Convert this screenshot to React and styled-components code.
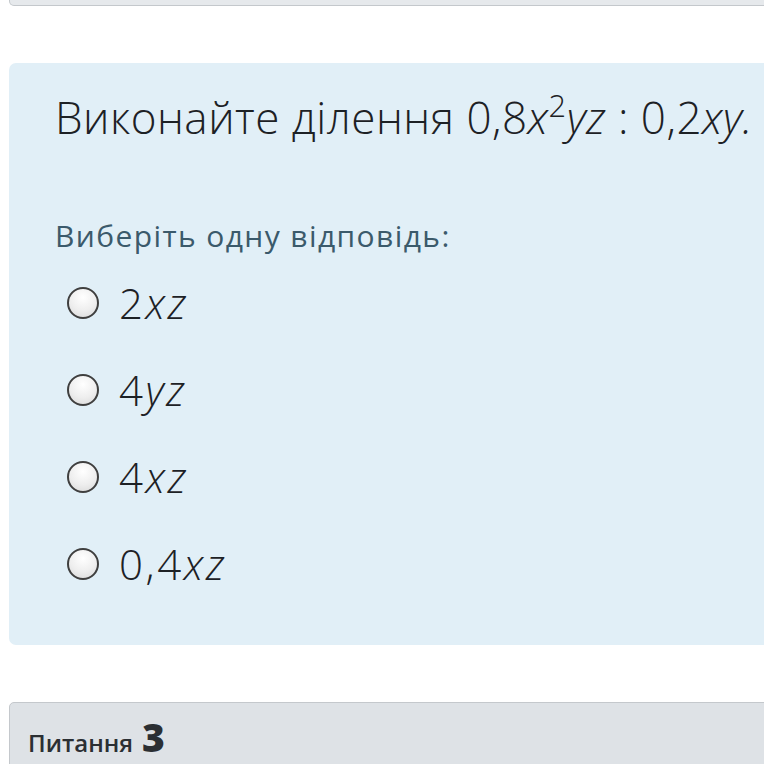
import React from "react";
import styled, { createGlobalStyle } from "styled-components";

const Global = createGlobalStyle`
  html, body { margin: 0; padding: 0; background: #fff; overflow: hidden; }
  body { font-family: "Open Sans", Lato, sans-serif; color: #1d2125; }
`;

const Page = styled.div`
  padding-left: 9px;
  width: 764px;
  box-sizing: border-box;
`;

const TopStub = styled.div`
  height: 5px;
  margin-right: -20px;
  background: #e6e9ec;
  border: 1px solid #c4c8cc;
  border-top: none;
  border-radius: 0 0 0 5px;
`;

const Panel = styled.div`
  margin-top: 57px;
  margin-right: -20px;
  background: #e1eff7;
  border-radius: 7px 0 0 7px;
  padding: 26px 46px 38px 46px;
`;

const Heading = styled.div`
  font-size: 44px;
  font-weight: 300;
  letter-spacing: 0.5px;
  line-height: 56px;
  color: #1d2125;
  white-space: nowrap;
`;

const Var = styled.i`
  font-style: italic;
`;

const Sup = styled.sup`
  font-size: 0.7em;
  line-height: 0;
  vertical-align: 0.55em;
`;

const Prompt = styled.div`
  margin-top: 73px;
  font-size: 30px;
  font-weight: 400;
  letter-spacing: 1.4px;
  line-height: 36px;
  color: #3b5a6b;
`;

const Options = styled.div`
  margin-top: 5px;
  display: flex;
  flex-direction: column;
`;

const Option = styled.label`
  display: flex;
  align-items: center;
  height: 87px;
  gap: 20px;
  padding-left: 12px;
  font-size: 42px;
  font-weight: 300;
  letter-spacing: 2.6px;
  color: #1d2125;
`;

const Radio = styled.span`
  width: 28px;
  height: 28px;
  border-radius: 50%;
  border: 2.5px solid #3f3f3f;
  background: radial-gradient(circle at 50% 30%, #ffffff 0%, #eeeeee 55%, #d8d8d8 100%);
  flex: none;
`;

const Footer = styled.div`
  margin-top: 57px;
  margin-right: -20px;
  background: #dee2e6;
  border: 1px solid #c4c8cc;
  border-radius: 5px 0 0 0;
  padding: 7px 18px 20px 18px;
  height: 80px;
  color: #2b2f33;
  display: flex;
  align-items: baseline;
  gap: 9px;
`;

const Label = styled.span`
  font-size: 24px;
  font-weight: 600;
`;

const Num = styled.span`
  font-size: 39px;
  font-weight: 800;
`;

const options = [
  ["2", "xz"],
  ["4", "yz"],
  ["4", "xz"],
  ["0,4", "xz"],
];

export default function App() {
  return (
    <>
      <Global />
      <Page>
        <TopStub />
        <Panel>
          <Heading>
            Виконайте ділення 0,8<Var>x</Var>
            <Sup>2</Sup>
            <Var>yz</Var> : 0,2<Var>xy.</Var>
          </Heading>
          <Prompt>Виберіть одну відповідь:</Prompt>
          <Options>
            {options.map(([n, v], i) => (
              <Option key={i}>
                <Radio />
                <span>
                  {n}
                  <Var>{v}</Var>
                </span>
              </Option>
            ))}
          </Options>
        </Panel>
        <Footer>
          <Label>Питання</Label>
          <Num>3</Num>
        </Footer>
      </Page>
    </>
  );
}
